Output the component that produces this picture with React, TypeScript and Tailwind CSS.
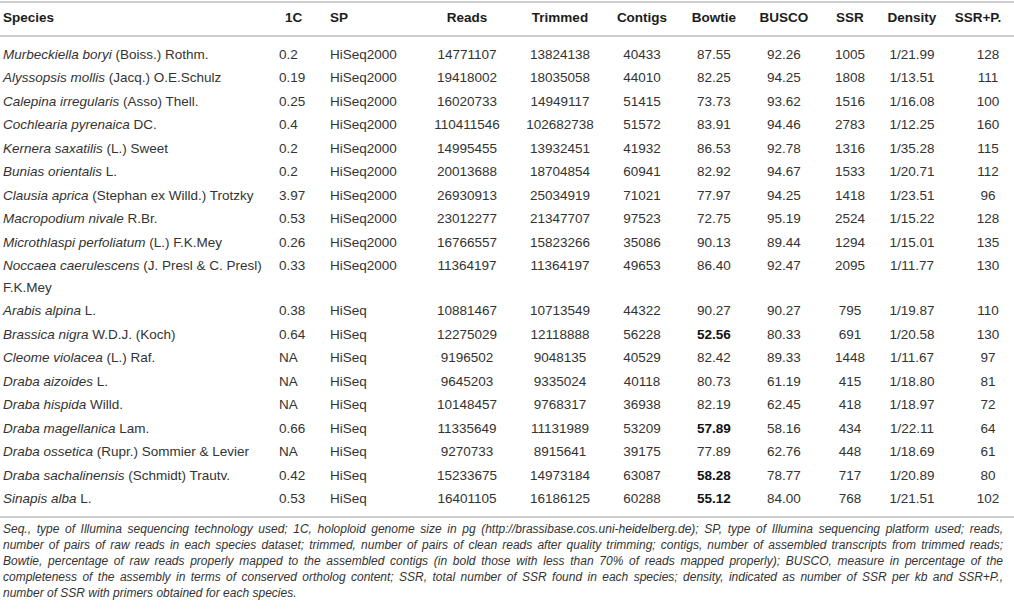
import React from "react";

type Row = {
  g: string;
  a: string;
  c1: string;
  sp: string;
  reads: string;
  trimmed: string;
  contigs: string;
  bowtie: string;
  bold?: boolean;
  busco: string;
  ssr: string;
  density: string;
  ssrp: string;
  wrap?: string;
};

const rows: Row[] = [
  { g: "Murbeckiella boryi", a: "(Boiss.) Rothm.", c1: "0.2", sp: "HiSeq2000", reads: "14771107", trimmed: "13824138", contigs: "40433", bowtie: "87.55", busco: "92.26", ssr: "1005", density: "1/21.99", ssrp: "128" },
  { g: "Alyssopsis mollis", a: "(Jacq.) O.E.Schulz", c1: "0.19", sp: "HiSeq2000", reads: "19418002", trimmed: "18035058", contigs: "44010", bowtie: "82.25", busco: "94.25", ssr: "1808", density: "1/13.51", ssrp: "111" },
  { g: "Calepina irregularis", a: "(Asso) Thell.", c1: "0.25", sp: "HiSeq2000", reads: "16020733", trimmed: "14949117", contigs: "51415", bowtie: "73.73", busco: "93.62", ssr: "1516", density: "1/16.08", ssrp: "100" },
  { g: "Cochlearia pyrenaica", a: "DC.", c1: "0.4", sp: "HiSeq2000", reads: "110411546", trimmed: "102682738", contigs: "51572", bowtie: "83.91", busco: "94.46", ssr: "2783", density: "1/12.25", ssrp: "160" },
  { g: "Kernera saxatilis", a: "(L.) Sweet", c1: "0.2", sp: "HiSeq2000", reads: "14995455", trimmed: "13932451", contigs: "41932", bowtie: "86.53", busco: "92.78", ssr: "1316", density: "1/35.28", ssrp: "115" },
  { g: "Bunias orientalis", a: "L.", c1: "0.2", sp: "HiSeq2000", reads: "20013688", trimmed: "18704854", contigs: "60941", bowtie: "82.92", busco: "94.67", ssr: "1533", density: "1/20.71", ssrp: "112" },
  { g: "Clausia aprica", a: "(Stephan ex Willd.) Trotzky", c1: "3.97", sp: "HiSeq2000", reads: "26930913", trimmed: "25034919", contigs: "71021", bowtie: "77.97", busco: "94.25", ssr: "1418", density: "1/23.51", ssrp: "96" },
  { g: "Macropodium nivale", a: "R.Br.", c1: "0.53", sp: "HiSeq2000", reads: "23012277", trimmed: "21347707", contigs: "97523", bowtie: "72.75", busco: "95.19", ssr: "2524", density: "1/15.22", ssrp: "128" },
  { g: "Microthlaspi perfoliatum", a: "(L.) F.K.Mey", c1: "0.26", sp: "HiSeq2000", reads: "16766557", trimmed: "15823266", contigs: "35086", bowtie: "90.13", busco: "89.44", ssr: "1294", density: "1/15.01", ssrp: "135" },
  { g: "Noccaea caerulescens", a: "(J. Presl & C. Presl)", wrap: "F.K.Mey", c1: "0.33", sp: "HiSeq2000", reads: "11364197", trimmed: "11364197", contigs: "49653", bowtie: "86.40", busco: "92.47", ssr: "2095", density: "1/11.77", ssrp: "130" },
  { g: "Arabis alpina", a: "L.", c1: "0.38", sp: "HiSeq", reads: "10881467", trimmed: "10713549", contigs: "44322", bowtie: "90.27", busco: "90.27", ssr: "795", density: "1/19.87", ssrp: "110" },
  { g: "Brassica nigra", a: "W.D.J. (Koch)", c1: "0.64", sp: "HiSeq", reads: "12275029", trimmed: "12118888", contigs: "56228", bowtie: "52.56", bold: true, busco: "80.33", ssr: "691", density: "1/20.58", ssrp: "130" },
  { g: "Cleome violacea", a: "(L.) Raf.", c1: "NA", sp: "HiSeq", reads: "9196502", trimmed: "9048135", contigs: "40529", bowtie: "82.42", busco: "89.33", ssr: "1448", density: "1/11.67", ssrp: "97" },
  { g: "Draba aizoides", a: "L.", c1: "NA", sp: "HiSeq", reads: "9645203", trimmed: "9335024", contigs: "40118", bowtie: "80.73", busco: "61.19", ssr: "415", density: "1/18.80", ssrp: "81" },
  { g: "Draba hispida", a: "Willd.", c1: "NA", sp: "HiSeq", reads: "10148457", trimmed: "9768317", contigs: "36938", bowtie: "82.19", busco: "62.45", ssr: "418", density: "1/18.97", ssrp: "72" },
  { g: "Draba magellanica", a: "Lam.", c1: "0.66", sp: "HiSeq", reads: "11335649", trimmed: "11131989", contigs: "53209", bowtie: "57.89", bold: true, busco: "58.16", ssr: "434", density: "1/22.11", ssrp: "64" },
  { g: "Draba ossetica", a: "(Rupr.) Sommier & Levier", c1: "NA", sp: "HiSeq", reads: "9270733", trimmed: "8915641", contigs: "39175", bowtie: "77.89", busco: "62.76", ssr: "448", density: "1/18.69", ssrp: "61" },
  { g: "Draba sachalinensis", a: "(Schmidt) Trautv.", c1: "0.42", sp: "HiSeq", reads: "15233675", trimmed: "14973184", contigs: "63087", bowtie: "58.28", bold: true, busco: "78.77", ssr: "717", density: "1/20.89", ssrp: "80" },
  { g: "Sinapis alba", a: "L.", c1: "0.53", sp: "HiSeq", reads: "16401105", trimmed: "16186125", contigs: "60288", bowtie: "55.12", bold: true, busco: "84.00", ssr: "768", density: "1/21.51", ssrp: "102" },
];

const GRID =
  "grid grid-cols-[276px_51px_93px_94px_92px_72px_72px_68px_64px_60px_72px]";

const footLines = [
  "Seq., type of Illumina sequencing technology used; 1C, holoploid genome size in pg (http://brassibase.cos.uni-heidelberg.de); SP, type of Illumina sequencing platform used; reads,",
  "number of pairs of raw reads in each species dataset; trimmed, number of pairs of clean reads after quality trimming; contigs, number of assembled transcripts from trimmed reads;",
  "Bowtie, percentage of raw reads properly mapped to the assembled contigs (in bold those with less than 70% of reads mapped properly); BUSCO, measure in percentage of the",
  "completeness of the assembly in terms of conserved ortholog content; SSR, total number of SSR found in each species; density, indicated as number of SSR per kb and SSR+P.,",
];

export default function App() {
  return (
    <div className="w-[1014px] h-[613px] bg-white pt-[1px] font-['Liberation_Sans',Arial,sans-serif] text-[#333333] overflow-hidden">
      <div className="border-t-2 border-[#cdcdcd]">
        <div className={`${GRID} h-[34px] items-center pb-[2px] text-[13.5px] font-bold text-[#1c1c1c] border-b-2 border-[#cdcdcd]`}>
          <div className="pl-[3px]">Species</div>
          <div className="pl-[9px]">1C</div>
          <div className="pl-[3px]">SP</div>
          <div className="text-center">Reads</div>
          <div className="text-center">Trimmed</div>
          <div className="text-center">Contigs</div>
          <div className="text-center">Bowtie</div>
          <div className="text-center">BUSCO</div>
          <div className="text-center">SSR</div>
          <div className="text-center">Density</div>
          <div className="text-center">SSR+P.</div>
        </div>
        <div className="py-[5.5px] text-[13.5px] leading-[21.5px]">
          {rows.map((r) => (
            <div key={r.g} className={`${GRID} py-[1px]`}>
              <div className="pl-[3px] whitespace-nowrap">
                <span className="italic">{r.g}</span> {r.a}
                {r.wrap ? (
                  <>
                    <br />
                    {r.wrap}
                  </>
                ) : null}
              </div>
              <div className="pl-[3px]">{r.c1}</div>
              <div className="pl-[3px]">{r.sp}</div>
              <div className="text-center">{r.reads}</div>
              <div className="text-center">{r.trimmed}</div>
              <div className="text-center">{r.contigs}</div>
              <div className={`text-center ${r.bold ? "font-bold text-[#111111]" : ""}`}>{r.bowtie}</div>
              <div className="text-center">{r.busco}</div>
              <div className="text-center">{r.ssr}</div>
              <div className="text-center">{r.density}</div>
              <div className="text-center pl-[20px]">{r.ssrp}</div>
            </div>
          ))}
        </div>
        <div className="border-t-2 border-[#cdcdcd] pt-[3px] pl-[3px] pr-[11px] text-[12px] leading-[16px] italic text-[#333333]">
          {footLines.map((l) => (
            <div key={l} className="text-justify [text-align-last:justify]">
              {l}
            </div>
          ))}
          <div>number of SSR with primers obtained for each species.</div>
        </div>
      </div>
    </div>
  );
}
